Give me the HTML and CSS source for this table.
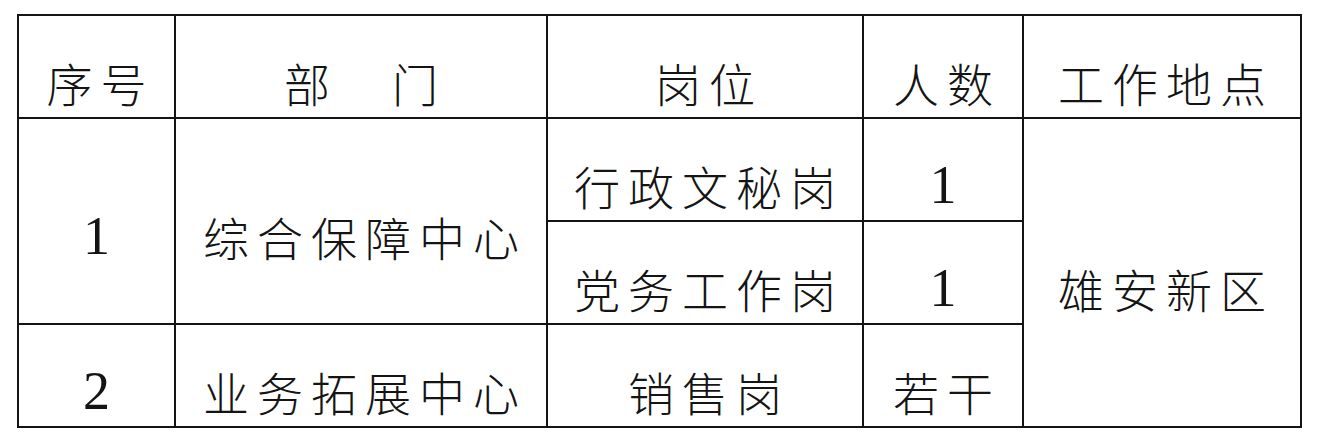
FILE: index.html
```html
<!DOCTYPE html>
<html lang="zh-CN">
<head>
<meta charset="utf-8">
<title>岗位表</title>
<link rel="stylesheet" href="styles.css">
</head>
<body>
<table class="jobs">
  <colgroup>
    <col class="c-no">
    <col class="c-dept">
    <col class="c-post">
    <col class="c-num">
    <col class="c-loc">
  </colgroup>
  <tr>
    <td>序号</td>
    <td>部　门</td>
    <td>岗位</td>
    <td>人数</td>
    <td>工作地点</td>
  </tr>
  <tr>
    <td rowspan="2" class="digit">1</td>
    <td rowspan="2">综合保障中心</td>
    <td>行政文秘岗</td>
    <td class="digit">1</td>
    <td rowspan="3">雄安新区</td>
  </tr>
  <tr>
    <td>党务工作岗</td>
    <td class="digit">1</td>
  </tr>
  <tr>
    <td class="digit">2</td>
    <td>业务拓展中心</td>
    <td>销售岗</td>
    <td>若干</td>
  </tr>
</table>
</body>
</html>
```
FILE: styles.css
```css
html, body {
  margin: 0;
  padding: 0;
  background: #ffffff;
}
body {
  padding: 14px 0 0 17px;
}
.jobs {
  border-collapse: collapse;
  table-layout: fixed;
  width: 1285px;
  color: #141414;
  font-family: "Noto Sans CJK SC", sans-serif;
  font-weight: 300;
  font-size: 46px;
}
.c-no { width: 157px; }
.c-dept { width: 372px; }
.c-post { width: 316px; }
.c-num { width: 160px; }
.c-loc { width: 278px; }
.jobs tr {
  height: 103px;
}
.jobs td {
  border: 2px solid #141414;
  text-align: center;
  vertical-align: middle;
  padding: 30px 0 0 0;
  letter-spacing: 8px;
  text-indent: 8px;
  line-height: 1;
  white-space: nowrap;
}
.jobs td.digit {
  font-family: "Liberation Serif", serif;
  font-weight: 400;
  font-size: 54px;
  letter-spacing: 0;
  text-indent: 0;
}
```
